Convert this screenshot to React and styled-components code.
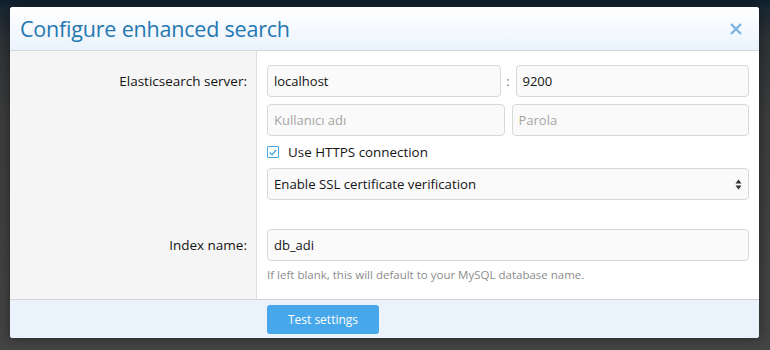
import React from 'react'
import styled, { createGlobalStyle } from 'styled-components'

const GlobalStyle = createGlobalStyle`
    html, body {
        margin: 0;
        padding: 0;
        height: 100%;
    }
    body {
        font-family: "Open Sans", "Noto Sans", Arial, sans-serif;
        overflow: hidden;
    }
`

const Backdrop = styled.div`
    width: 770px;
    height: 350px;
    box-sizing: border-box;
    padding: 7px 0 0 10px;
    background: linear-gradient(to bottom, #0f1f2e 0, #1a2733 8px, #2e3236 40px, #3d3d3d 120px, #444 350px);
`

const Overlay = styled.div`
    width: 749px;
    height: 331px;
    display: flex;
    flex-direction: column;
    background: #fff;
    border-radius: 3px;
    overflow: hidden;
    box-shadow: 0 0 12px rgba(0, 0, 0, .45);
`

const Header = styled.div`
    height: 43px;
    flex: none;
    display: flex;
    align-items: center;
    justify-content: space-between;
    padding: 0 10px;
    background: linear-gradient(to bottom, #ffffff, #eaf3fc);
    border-bottom: 1px solid #d8d8d8;
    & h2 {
        margin: 0;
        font-weight: 400;
        font-size: 21.5px;
        color: #2577b1;
        letter-spacing: -0.2px;
    }
`

const Close = styled.button`
    border: none;
    background: none;
    padding: 0;
    margin-right: 6px;
    display: flex;
    color: #7bb4e1;
    cursor: pointer;
`

const Body = styled.div`
    flex: 1;
    display: flex;
    flex-direction: column;
    background: linear-gradient(to right, #f5f5f5 0, #f5f5f5 246px, #dfdfdf 246px, #dfdfdf 247px, #fff 247px);
`

const Row = styled.div`
    display: grid;
    grid-template-columns: 247px 1fr;
    padding-top: ${props => props.top || 0}px;
    padding-bottom: ${props => props.bottom || 0}px;
`

const Label = styled.div`
    text-align: right;
    padding: 7px 10px 0 0;
    font-size: 13.5px;
    color: #141414;
`

const Field = styled.div`
    padding: 0 10px;
    display: flex;
    flex-direction: column;
`

const Pair = styled.div`
    display: grid;
    grid-template-columns: ${props => props.colon ? '1fr 15px 1fr' : '1fr 7px 1fr'};
    align-items: center;
    margin-bottom: ${props => props.gap || 0}px;
    & > span {
        text-align: center;
        font-size: 13px;
        color: #777;
    }
`

const Input = styled.input`
    height: 32px;
    box-sizing: border-box;
    width: 100%;
    border: 1px solid #d8d8d8;
    border-radius: 4px;
    background: #fafafa;
    padding: 0 6px;
    font-family: inherit;
    font-size: 13px;
    color: #141414;
    outline: none;
    &::placeholder {
        color: #a5a5a5;
    }
`

const Check = styled.label`
    display: flex;
    align-items: center;
    gap: 9px;
    height: 16px;
    margin: 8px 0;
    font-size: 13.4px;
    color: #141414;
`

const Box = styled.span`
    width: 12px;
    height: 12px;
    box-sizing: border-box;
    border: 1px solid #47a7eb;
    border-radius: 1px;
    background: #fff;
    display: flex;
    align-items: center;
    justify-content: center;
`

const Select = styled.div`
    height: 32px;
    box-sizing: border-box;
    border: 1px solid #d8d8d8;
    border-radius: 4px;
    background: #fafafa;
    padding: 0 6px;
    display: flex;
    align-items: center;
    justify-content: space-between;
    font-size: 13.2px;
    color: #141414;
`

const Hint = styled.div`
    margin-top: 6px;
    font-size: 11.5px;
    color: #8c8c8c;
`

const Footer = styled.div`
    height: 39px;
    flex: none;
    box-sizing: border-box;
    border-top: 1px solid #d3d3d3;
    background: #eaf3fc;
    padding: 5px 0 0 257px;
`

const Button = styled.button`
    width: 112px;
    height: 29px;
    border: none;
    border-radius: 3px;
    background: #47a7eb;
    color: #fff;
    font-family: inherit;
    font-size: 12px;
    cursor: pointer;
`

const App = () => {
    return (
        <Backdrop>
            <GlobalStyle />
            <Overlay>
                <Header>
                    <h2>Configure enhanced search</h2>
                    <Close aria-label="Close">
                        <svg width="14" height="14" viewBox="0 0 14 14">
                            <path d="M2 2 L12 12 M12 2 L2 12" stroke="currentColor" strokeWidth="2.4" />
                        </svg>
                    </Close>
                </Header>
                <Body>
                    <Row top={14}>
                        <Label>Elasticsearch server:</Label>
                        <Field>
                            <Pair colon gap={7}>
                                <Input defaultValue="localhost" />
                                <span>:</span>
                                <Input defaultValue="9200" />
                            </Pair>
                            <Pair>
                                <Input placeholder="Kullanıcı adı" />
                                <span />
                                <Input placeholder="Parola" type="password" />
                            </Pair>
                            <Check>
                                <Box>
                                    <svg width="8" height="7" viewBox="0 0 8 7">
                                        <path d="M0.8 3.6 L3 5.8 L7.2 1" stroke="#47a7eb" strokeWidth="1.4" fill="none" />
                                    </svg>
                                </Box>
                                Use HTTPS connection
                            </Check>
                            <Select>
                                Enable SSL certificate verification
                                <svg width="7" height="11" viewBox="0 0 7 11">
                                    <path d="M3.5 0.5 L6.5 4.5 H0.5 Z M3.5 10.5 L6.5 6.5 H0.5 Z" fill="#333" />
                                </svg>
                            </Select>
                        </Field>
                    </Row>
                    <Row top={29} bottom={16}>
                        <Label>Index name:</Label>
                        <Field>
                            <Input defaultValue="db_adi" />
                            <Hint>If left blank, this will default to your MySQL database name.</Hint>
                        </Field>
                    </Row>
                </Body>
                <Footer>
                    <Button>Test settings</Button>
                </Footer>
            </Overlay>
        </Backdrop>
    )
}

export default App
